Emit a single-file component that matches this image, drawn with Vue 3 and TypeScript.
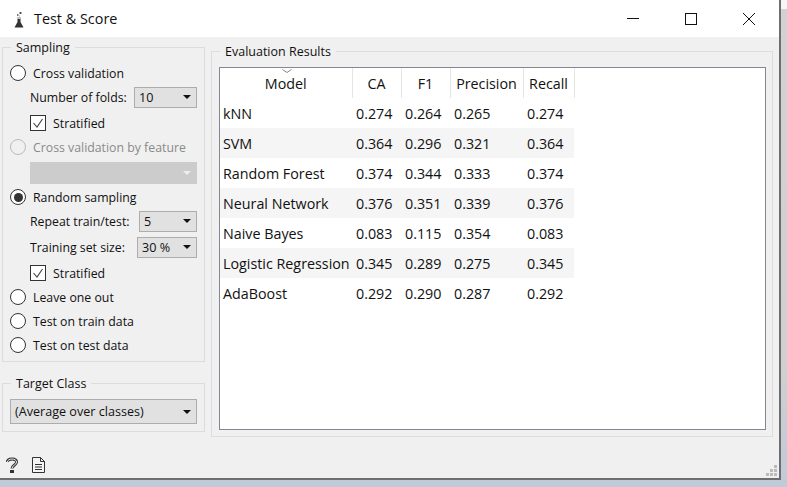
<script setup lang="ts">
const columns = ["CA", "F1", "Precision", "Recall"];

const results = [
  { model: "kNN", scores: ["0.274", "0.264", "0.265", "0.274"] },
  { model: "SVM", scores: ["0.364", "0.296", "0.321", "0.364"] },
  { model: "Random Forest", scores: ["0.374", "0.344", "0.333", "0.374"] },
  { model: "Neural Network", scores: ["0.376", "0.351", "0.339", "0.376"] },
  { model: "Naive Bayes", scores: ["0.083", "0.115", "0.354", "0.083"] },
  { model: "Logistic Regression", scores: ["0.345", "0.289", "0.275", "0.345"] },
  { model: "AdaBoost", scores: ["0.292", "0.290", "0.287", "0.292"] },
];
</script>

<template>
  <div class="desktop">
    <div class="window">
      <header class="titlebar">
        <svg class="app-icon" width="10" height="16" viewBox="0 0 10 16">
          <path d="M3.5 7h3v3l3 5.5H.5l3-5.5z" fill="#333" />
          <rect x="3" y="5.5" width="4" height="1" fill="#888" />
          <rect x="3" y="2" width="1.5" height="2" fill="#777" />
          <rect x="5.5" y="0" width="2" height="2" fill="#555" />
          <rect x="5" y="3.5" width="1" height="1" fill="#aaa" />
        </svg>
        <span class="title">Test &amp; Score</span>
        <div class="controls">
          <svg width="12" height="12" viewBox="0 0 12 12"><path d="M0 5.5h12" stroke="#111" fill="none" /></svg>
          <svg width="12" height="12" viewBox="0 0 12 12"><rect x=".5" y=".5" width="11" height="11" stroke="#111" fill="none" /></svg>
          <svg width="12" height="12" viewBox="0 0 12 12"><path d="M0 0l12 12M12 0L0 12" stroke="#111" fill="none" /></svg>
        </div>
      </header>

      <main class="content">
        <aside class="left">
          <fieldset class="group sampling">
            <legend>Sampling</legend>
            <div class="row"><span class="radio"></span>Cross validation</div>
            <div class="row sub">
              <span>Number of folds:</span>
              <div class="combo folds">10<i class="arrow"></i></div>
            </div>
            <div class="row sub spaced">
              <span class="check"><svg width="14" height="14" viewBox="0 0 14 14"><path d="M2.5 7l3.5 4 5.5-8" stroke="#444" stroke-width="1.1" fill="none" /></svg></span>Stratified
            </div>
            <div class="row disabled"><span class="radio"></span>Cross validation by feature</div>
            <div class="row sub spaced">
              <div class="combo blank"><i class="arrow"></i></div>
            </div>
            <div class="row"><span class="radio on"></span>Random sampling</div>
            <div class="row sub">
              <span>Repeat train/test:</span>
              <div class="combo repeat">5<i class="arrow"></i></div>
            </div>
            <div class="row sub spaced">
              <span>Training set size:</span>
              <div class="combo size">30 %<i class="arrow"></i></div>
            </div>
            <div class="row sub spaced">
              <span class="check"><svg width="14" height="14" viewBox="0 0 14 14"><path d="M2.5 7l3.5 4 5.5-8" stroke="#444" stroke-width="1.1" fill="none" /></svg></span>Stratified
            </div>
            <div class="row"><span class="radio"></span>Leave one out</div>
            <div class="row"><span class="radio"></span>Test on train data</div>
            <div class="row"><span class="radio"></span>Test on test data</div>
          </fieldset>

          <fieldset class="group target">
            <legend>Target Class</legend>
            <div class="combo wide">(Average over classes)<i class="arrow"></i></div>
          </fieldset>
        </aside>

        <fieldset class="group results">
          <legend>Evaluation Results</legend>
          <div class="table-box">
            <table>
              <thead>
                <tr>
                  <th class="model-col">
                    <svg class="sort" width="10" height="4" viewBox="0 0 10 4"><path d="M.5.5L5 3.5 9.5.5" stroke="#888" fill="none" /></svg>
                    Model
                  </th>
                  <th v-for="col in columns" :key="col">{{ col }}</th>
                </tr>
              </thead>
              <tbody>
                <tr v-for="r in results" :key="r.model">
                  <td>{{ r.model }}</td>
                  <td v-for="(s, i) in r.scores" :key="i" class="num">{{ s }}</td>
                </tr>
              </tbody>
            </table>
          </div>
        </fieldset>
      </main>

      <footer class="statusbar">
        <svg width="12" height="16" viewBox="0 0 12 16">
          <path d="M1.5 5C1.5 1 10.5 1 10.5 5c0 3.2-4.5 3.2-4.5 6.5" stroke="#333" stroke-width="3" fill="none" />
          <path d="M1.5 5C1.5 1 10.5 1 10.5 5c0 3.2-4.5 3.2-4.5 6.5" stroke="#f0f0f0" stroke-width="1" fill="none" />
          <rect x="4" y="13" width="4" height="3" fill="#333" />
        </svg>
        <svg width="13" height="16" viewBox="0 0 13 16">
          <path d="M.5.5h8l4 4v11H.5z M8.5.5v4h4" stroke="#333" fill="#f4f4f4" />
          <path d="M3 7.5h7M3 10h7M3 12.5h7" stroke="#333" fill="none" />
        </svg>
        <svg class="grip" width="12" height="12" viewBox="0 0 12 12" fill="#bbb">
          <rect x="8" y="0" width="3" height="3" />
          <rect x="4" y="4" width="3" height="3" /><rect x="8" y="4" width="3" height="3" />
          <rect x="0" y="8" width="3" height="3" /><rect x="4" y="8" width="3" height="3" /><rect x="8" y="8" width="3" height="3" />
        </svg>
      </footer>
    </div>
  </div>
</template>

<style>
html,
body {
  margin: 0;
}
</style>

<style scoped>
.desktop {
  width: 787px;
  height: 487px;
  overflow: hidden;
  background: linear-gradient(#f6f6f6 0 9px, #d2d2d2 9px, #d0d0d0 360px, #c0cad8 100%);
  font-family: "Open Sans", "Noto Sans", sans-serif;
  font-size: 12.3px;
  color: #111;
}

.window {
  width: 781px;
  height: 480px;
  display: flex;
  flex-direction: column;
  background: #f0f0f0;
  border-right: 2px solid #6e6e6e;
  border-bottom: 2px solid #6e6e6e;
  box-sizing: border-box;
}

.titlebar {
  height: 37px;
  flex: none;
  display: flex;
  align-items: center;
  background: #fff;
  padding-left: 14px;
}

.app-icon {
  margin: 3px 10px 0 0;
}

.title {
  font-size: 14.4px;
}

.controls {
  margin-left: auto;
  display: flex;
  gap: 46px;
  padding-right: 24px;
}

.content {
  flex: 1;
  display: flex;
  padding: 0 6px 0 2px;
  gap: 6px;
  min-height: 0;
}

.left {
  width: 203px;
  flex: none;
  padding-top: 2px;
}

.group {
  margin: 0;
  padding: 0;
  border: 1px solid #dcdcdc;
  box-sizing: border-box;
  min-width: 0;
}

.group legend {
  margin-left: 1px;
  padding: 0 5px;
  font-size: 12.5px;
  line-height: 17px;
}

.sampling {
  height: 323px;
  padding: 5px 7px 0;
}

.target {
  height: 57px;
  margin-top: 13px;
  padding: 7px 7px 0;
}

.results {
  flex: 1;
  height: 394px;
  margin-top: 6px;
  padding: 7px 6px 6px 7px;
  display: flex;
}

.row {
  height: 24px;
  display: flex;
  align-items: center;
  white-space: nowrap;
}

.spaced {
  margin-top: 2px;
}

.sub {
  padding-left: 20px;
  justify-content: space-between;
}

.sub:has(.check) {
  justify-content: flex-start;
}

.disabled {
  color: #8a8a8a;
}

.radio {
  width: 14px;
  height: 14px;
  border: 1px solid #333;
  border-radius: 50%;
  background: #fff;
  margin-right: 7px;
  flex: none;
  position: relative;
}

.disabled .radio {
  border-color: #bbb;
  background: #f0f0f0;
}

.radio.on::after {
  content: "";
  position: absolute;
  inset: 2.5px;
  border-radius: 50%;
  background: #333;
}

.check {
  width: 14px;
  height: 14px;
  border: 1px solid #333;
  background: #fff;
  margin-right: 7px;
  display: flex;
  align-items: center;
  justify-content: center;
  flex: none;
}

.combo {
  height: 21px;
  box-sizing: border-box;
  border: 1px solid #adadad;
  background: #e1e1e1;
  display: flex;
  align-items: center;
  padding-left: 4px;
  position: relative;
  font-size: 12.6px;
}

.folds {
  width: 63px;
}

.repeat {
  width: 58px;
}

.size {
  width: 60px;
}

.blank {
  width: 167px;
  height: 22px;
  background: #ccc;
  border-color: #ccc;
}

.wide {
  height: 25px;
  width: 187px;
}

.arrow {
  position: absolute;
  right: 5px;
  top: 50%;
  margin-top: -2px;
  border-left: 4px solid transparent;
  border-right: 4px solid transparent;
  border-top: 4px solid #111;
}

.blank .arrow {
  border-top-color: #eee;
}

.table-box {
  flex: 1;
  border: 1px solid #828790;
  background: #fff;
}

table {
  border-collapse: collapse;
  table-layout: fixed;
  width: 354px;
  font-size: 14.3px;
}

th {
  height: 30px;
  padding: 0;
  font-weight: 400;
  width: 49px;
  box-sizing: border-box;
  border-right: 1px solid #e5e5e5;
  position: relative;
}

th.model-col {
  width: 132px;
}

th:nth-child(4) {
  width: 73px;
}

th:nth-child(5) {
  width: 51px;
}

.sort {
  position: absolute;
  top: 1px;
  left: 62px;
}

td {
  height: 30px;
  padding: 0 0 0 3px;
  white-space: nowrap;
}

td.num {
  padding-left: 4px;
}

tbody tr:nth-child(even) {
  background: #f5f5f5;
}

.statusbar {
  height: 42px;
  flex: none;
  display: flex;
  align-items: center;
  gap: 14px;
  padding: 15px 0 0 6px;
  box-sizing: border-box;
  position: relative;
}

.grip {
  position: absolute;
  right: 1px;
  bottom: 1px;
}
</style>
